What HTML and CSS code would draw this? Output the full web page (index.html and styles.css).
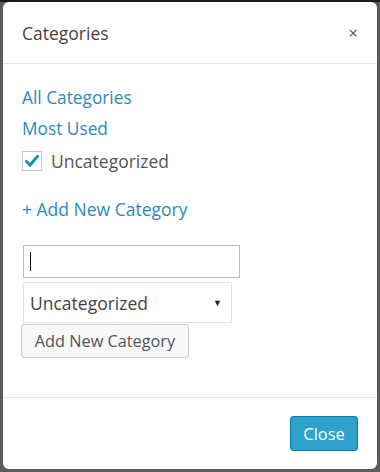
FILE: index.html
```html
<!DOCTYPE html>
<html>
<head>
<meta charset="utf-8">
<link rel="stylesheet" href="styles.css">
</head>
<body>
<div class="modal">
  <div class="modal-header">
    <span class="title">Categories</span>
    <span class="close-x">×</span>
  </div>
  <div class="modal-body">
    <a class="link">All Categories</a>
    <a class="link">Most Used</a>
    <label class="check-row">
      <span class="checkbox">
        <svg width="14" height="12" viewBox="0 0 14 12"><path d="M1.5 6.5 L5 10 L12.5 1.5" fill="none" stroke="#1e8cbe" stroke-width="3" stroke-linecap="square"/></svg>
      </span>
      <span class="check-label">Uncategorized</span>
    </label>
    <a class="link add-link">+ Add New Category</a>
    <div class="form">
      <div class="text-input"><span class="caret"></span></div>
      <div class="select">
        <span>Uncategorized</span>
        <span class="arrow">▼</span>
      </div>
      <div class="btn">Add New Category</div>
    </div>
  </div>
  <div class="modal-footer">
    <div class="btn-primary">Close</div>
  </div>
</div>
</body>
</html>
```

FILE: styles.css
```css
html, body {
  margin: 0;
  padding: 0;
}
body {
  width: 380px;
  height: 472px;
  background: #5b5b5b;
  border-top: 2px solid #1a1a1a;
  box-sizing: border-box;
  padding: 0 3px 3px 3px;
  font-family: "Open Sans", sans-serif;
  overflow: hidden;
}
.modal {
  background: #fff;
  border-radius: 6px;
  height: 467px;
  display: flex;
  flex-direction: column;
  overflow: hidden;
}
.modal-header {
  height: 61px;
  border-bottom: 1px solid #e5e5e5;
  display: flex;
  align-items: center;
  justify-content: space-between;
  padding: 0 19px 0 19px;
  flex-shrink: 0;
}
.title {
  font-size: 17.5px;
  color: #444;
}
.close-x {
  font-size: 17px;
  color: #555;
}
.modal-body {
  flex: 1;
  padding: 18px 19px 0 19px;
  display: flex;
  flex-direction: column;
  align-items: flex-start;
}
.link {
  color: #2a8bb9;
  font-size: 17.3px;
  line-height: 31px;
}
.check-row {
  display: flex;
  align-items: center;
  height: 34px;
  margin-top: 0;
}
.checkbox {
  width: 20px;
  height: 20px;
  border: 1px solid #c4c4c4;
  box-sizing: border-box;
  display: flex;
  align-items: center;
  justify-content: center;
  margin-right: 9px;
}
.check-label {
  font-size: 17.5px;
  color: #555;
}
.add-link {
  margin-top: 16px;
  font-size: 17.5px;
}
.form {
  margin-top: 20px;
  display: flex;
  flex-direction: column;
  align-items: flex-start;
}
.text-input {
  margin-left: 1px;
  width: 217px;
  height: 33px;
  border: 1px solid #bbb;
  box-sizing: border-box;
  display: flex;
  align-items: center;
  padding-left: 6px;
}
.caret {
  width: 1px;
  height: 19px;
  background: #000;
}
.select {
  margin-left: 1px;
  margin-top: 4px;
  width: 209px;
  height: 41px;
  border: 1px solid #e3e3e3;
  box-sizing: border-box;
  display: flex;
  align-items: center;
  justify-content: space-between;
  padding: 0 9px 0 6px;
  font-size: 17.5px;
  color: #444;
}
.arrow {
  font-size: 9px;
  color: #222;
}
.btn {
  margin-left: -1px;
  margin-top: 1px;
  width: 168px;
  height: 34px;
  border: 1px solid #ccc;
  border-radius: 3px;
  background: #f7f7f7;
  box-sizing: border-box;
  display: flex;
  align-items: center;
  justify-content: center;
  font-size: 16.3px;
  color: #555;
}
.modal-footer {
  height: 72px;
  border-top: 1px solid #e5e5e5;
  display: flex;
  align-items: flex-start;
  justify-content: flex-end;
  padding: 18px 19px 0 0;
  box-sizing: border-box;
  flex-shrink: 0;
}
.btn-primary {
  width: 68px;
  height: 35px;
  background: #2ea2cc;
  border: 1px solid #0e7fa6;
  border-radius: 3px;
  box-sizing: border-box;
  color: #fff;
  font-size: 16.4px;
  display: flex;
  align-items: center;
  justify-content: center;
}
```
